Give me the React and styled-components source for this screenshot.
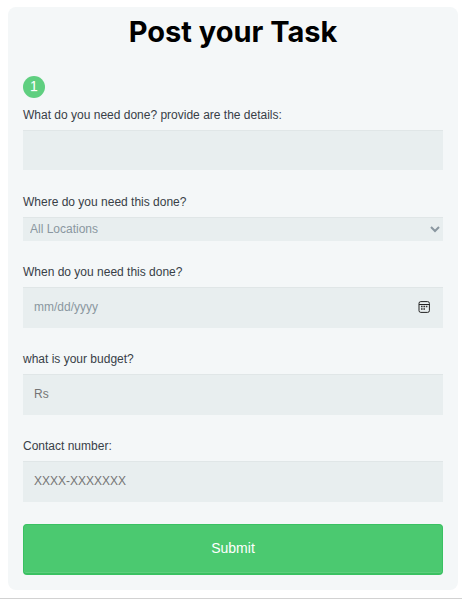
import React from "react";
import styled, { createGlobalStyle, css } from "styled-components";

const GlobalStyle = createGlobalStyle`
  * { box-sizing: border-box; }
  body {
    margin: 0;
    background: #fff;
    font-family: Arial, "Liberation Sans", Helvetica, sans-serif;
  }
`;

const Page = styled.main`
  padding: 7px 4px 8px 8px;
  border-bottom: 1px solid #d2d2d2;
  box-shadow: 0 1px 0 #f0f0f0;
`;

const Card = styled.form`
  padding: 0 15px 15px;
  border-radius: 8px;
  background: #f4f7f8;
`;

const Title = styled.h1`
  margin: 0;
  padding-top: 5px;
  color: #000;
  font: 700 29px/40px Inter, "Noto Sans", sans-serif;
  text-align: center;
`;

const StepNumber = styled.span`
  display: block;
  width: 22px;
  height: 22px;
  margin: 24px 0 7px;
  border-radius: 50%;
  background: #5fcf80;
  color: #fff;
  font-size: 14px;
  line-height: 21px;
  text-align: center;
  text-shadow: 0 1px 0 rgba(255, 255, 255, 0.2);
`;

const Field = styled.div`
  display: flex;
  flex-direction: column;
  gap: 5px;
  margin-bottom: ${(p) => (p.$last ? "22px" : "21px")};
`;

const Label = styled.label`
  color: #384047;
  font-size: 12px;
  line-height: 20px;
`;

const control = css`
  display: block;
  width: 100%;
  margin: 0;
  border: 0;
  border-radius: 0;
  outline: 0;
  background: #e8eeef;
  color: #8a97a0;
  box-shadow: 0 1px 0 rgba(0, 0, 0, 0.03) inset;
  font-family: inherit;
  font-size: 12px;
`;

const TextInput = styled.input`
  ${control}
  height: 41px;
  padding: 10px 11px 12px;
  &::placeholder { color: #757575; }
`;

const DateInput = styled(TextInput)`
  &::-webkit-calendar-picker-indicator { opacity: 0; }
  &::-webkit-datetime-edit-month-field,
  &::-webkit-datetime-edit-day-field,
  &::-webkit-datetime-edit-year-field {
    padding: 0;
  }
`;

const DateBox = styled.div`
  position: relative;
`;

const CalendarIcon = styled.svg`
  position: absolute;
  top: 14px;
  right: 13px;
  width: 12px;
  height: 12px;
  pointer-events: none;
`;

const TextArea = styled.textarea`
  ${control}
  height: 40px;
  margin-bottom: 1px;
  padding: 10px 11px;
  resize: none;
`;

const Select = styled.select`
  ${control}
  height: 24px;
  padding: 0 3px;
`;

const SubmitButton = styled.button`
  display: block;
  width: 100%;
  height: 51px;
  padding: 0 0 2px;
  border: 1px solid #3ac162;
  border-bottom-width: 2px;
  border-radius: 4px;
  background: #4bc970;
  box-shadow: 0 -1px 0 rgba(255, 255, 255, 0.1) inset;
  color: #fff;
  font-family: inherit;
  font-size: 14px;
  text-align: center;
`;

export default function App() {
  return (
    <>
      <GlobalStyle />
      <Page>
        <Card onSubmit={(e) => e.preventDefault()}>
          <Title>Post your Task</Title>
          <StepNumber>1</StepNumber>
          <Field>
            <Label htmlFor="details">What do you need done? provide are the details:</Label>
            <TextArea id="details" rows={1} />
          </Field>
          <Field>
            <Label htmlFor="location">Where do you need this done?</Label>
            <Select id="location" defaultValue="all">
              <option value="all">All Locations</option>
            </Select>
          </Field>
          <Field>
            <Label htmlFor="date">When do you need this done?</Label>
            <DateBox>
              <DateInput id="date" type="date" />
              <CalendarIcon viewBox="0 0 12 12" fill="none" aria-hidden="true">
                <rect x="1" y="0.6" width="10.4" height="10.8" rx="1.8" stroke="#222" strokeWidth="1" />
                <path d="M1 3.5h10.4" stroke="#222" strokeWidth="1" />
                <path d="M3 5.5h1.6M5.4 5.5h1.6M7.8 5.5h1.6M3 8h1.6M5.4 8h1.6" stroke="#333" strokeWidth="1.5" />
              </CalendarIcon>
            </DateBox>
          </Field>
          <Field>
            <Label htmlFor="budget">what is your budget?</Label>
            <TextInput id="budget" type="text" placeholder="Rs" />
          </Field>
          <Field $last>
            <Label htmlFor="contact">Contact number:</Label>
            <TextInput id="contact" type="tel" placeholder="XXXX-XXXXXXX" />
          </Field>
          <SubmitButton type="submit">Submit</SubmitButton>
        </Card>
      </Page>
    </>
  );
}
